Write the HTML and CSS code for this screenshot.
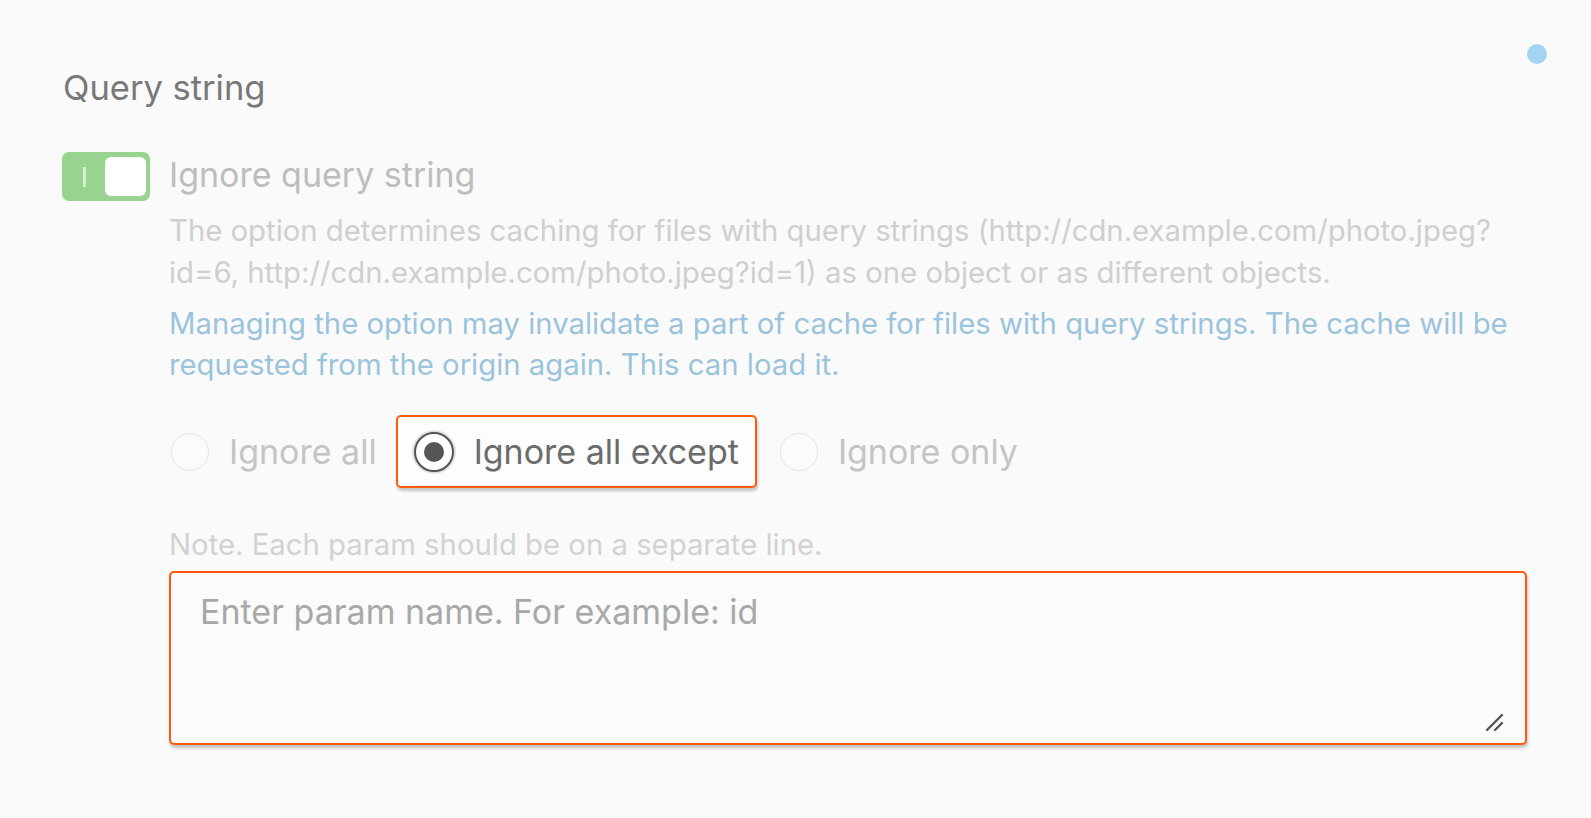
FILE: index.html
```html
<!DOCTYPE html>
<html lang="en">
<head>
<meta charset="utf-8">
<title>Query string</title>
<link rel="stylesheet" href="styles.css">
</head>
<body>
<div class="page">
  <span class="status-dot"></span>
  <h2 class="section-title">Query string</h2>
  <div class="option">
    <div class="toggle">
      <span class="toggle-mark"></span>
      <span class="toggle-knob"></span>
    </div>
    <div class="option-body">
      <div class="option-label">Ignore query string</div>
      <p class="option-desc">The option determines caching for files with query strings (http://cdn.example.com/photo.jpeg?<br>id=6, http://cdn.example.com/photo.jpeg?id=1) as one object or as different objects.</p>
      <p class="option-warn">Managing the option may invalidate a part of cache for files with query strings. The cache will be<br>requested from the origin again. This can load it.</p>
      <div class="radio-row">
        <label class="radio-item"><span class="radio"></span><span class="radio-text">Ignore all</span></label>
        <label class="radio-item is-selected"><span class="radio"><span class="radio-dot"></span></span><span class="radio-text">Ignore all except</span></label>
        <label class="radio-item"><span class="radio"></span><span class="radio-text">Ignore only</span></label>
      </div>
      <div class="note">Note. Each param should be on a separate line.</div>
      <div class="textarea-wrap">
        <textarea class="params" placeholder="Enter param name. For example: id"></textarea>
        <svg class="grip" width="20" height="20" viewBox="0 0 20 20"><path d="M2 17 L17 2 M10 17 L17 10" stroke="#555" stroke-width="2.4" stroke-linecap="round" fill="none"/></svg>
      </div>
    </div>
  </div>
</div>
</body>
</html>
```

FILE: styles.css
```css
html, body {
  margin: 0;
  padding: 0;
  background: #fafafa;
}
body {
  font-family: "Inter", "Noto Sans", sans-serif;
  width: 1591px;
  height: 818px;
  overflow: hidden;
}
.page {
  position: relative;
  padding: 67px 0 0 62px;
}
.status-dot {
  position: absolute;
  left: 1527px;
  top: 44px;
  width: 20px;
  height: 20px;
  border-radius: 50%;
  background: #a3d4f3;
}
.section-title {
  margin: 0;
  font-size: 34.5px;
  line-height: 41px;
  font-weight: 400;
  color: #787878;
  padding-left: 1px;
}
.option {
  display: flex;
  align-items: flex-start;
  gap: 19px;
  margin-top: 44px;
}
.toggle {
  position: relative;
  flex: none;
  width: 88px;
  height: 49px;
  border-radius: 7px;
  background: #98d490;
  display: flex;
  align-items: center;
  justify-content: flex-end;
  padding: 0 4px;
  box-sizing: border-box;
}
.toggle-mark {
  position: absolute;
  left: 21px;
  top: 15px;
  width: 3px;
  height: 20px;
  background: #d7f0d3;
}
.toggle-knob {
  width: 41px;
  height: 39px;
  border-radius: 6px;
  background: #fff;
}
.option-body {
  flex: 1;
  padding-right: 64px;
}
.option-label {
  font-size: 34px;
  line-height: 45px;
  color: #bdbdbd;
}
.option-desc, .option-warn {
  margin: 0;
  font-size: 29.3px;
}
.option-desc {
  margin-top: 13px;
  line-height: 42px;
  color: #cfcfcf;
}
.option-warn {
  margin-top: 9px;
  line-height: 41px;
  color: #9ac4dc;
}
.radio-row {
  display: flex;
  align-items: center;
  gap: 1px;
  margin: 30px 0 0 -16px;
}
.radio-item {
  display: flex;
  align-items: center;
  gap: 20px;
  height: 73px;
  padding: 0 16px;
  border: 2px solid transparent;
  border-radius: 5px;
  box-sizing: border-box;
  font-size: 34px;
  color: #c4c4c4;
}
.radio-item:last-child {
  margin-left: 4px;
}
.radio {
  width: 38px;
  height: 38px;
  border-radius: 50%;
  border: 1px solid #e6e6e6;
  box-sizing: border-box;
  background: #fbfbfb;
  display: flex;
  align-items: center;
  justify-content: center;
}
.radio-item.is-selected {
  border-color: #ff5a0a;
  background: #fdfdfd;
  box-shadow: 1px 3px 3px rgba(0, 0, 0, 0.22);
  color: #6b6b6b;
}
.is-selected .radio {
  width: 40px;
  height: 40px;
  border: 2px solid #555;
  background: #fff;
  box-shadow: 0 0 0 2px #e2e2e2;
}
.radio-dot {
  width: 20px;
  height: 20px;
  border-radius: 50%;
  background: #555;
}
.note {
  margin-top: 36px;
  font-size: 29.3px;
  line-height: 42px;
  color: #d2d2d2;
}
.textarea-wrap {
  position: relative;
  margin-top: 5px;
}
.params {
  display: block;
  width: 100%;
  height: 174px;
  box-sizing: border-box;
  border: 2px solid #ff5a0a;
  border-radius: 5px;
  background: #fbfbfb;
  box-shadow: 1px 3px 3px rgba(0, 0, 0, 0.22);
  padding: 18px 29px;
  font-family: "Inter", "Noto Sans", sans-serif;
  font-size: 34px;
  line-height: 41px;
  color: #555;
  resize: none;
  outline: none;
}
.params::placeholder {
  color: #a8a8a8;
}
.grip {
  position: absolute;
  right: 22px;
  bottom: 12px;
}
```
